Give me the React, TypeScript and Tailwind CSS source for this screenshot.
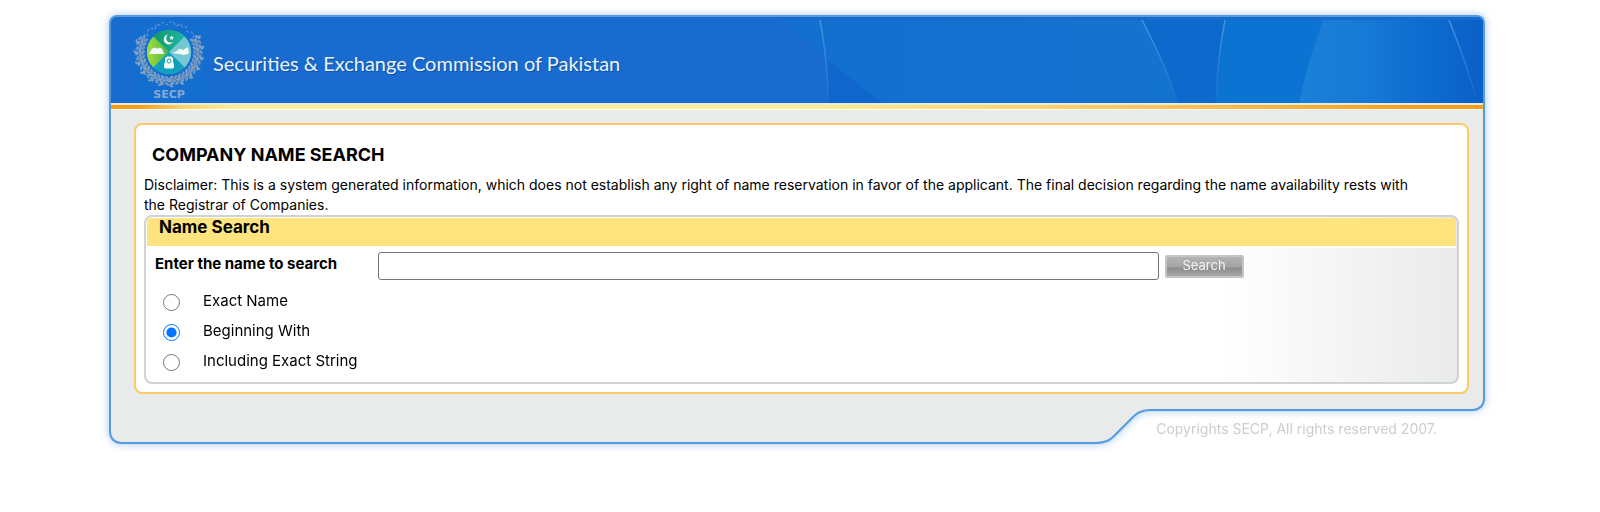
import { useState } from "react";

const searchModes = [
  { value: "exact", label: "Exact Name" },
  { value: "beginning", label: "Beginning With" },
  { value: "including", label: "Including Exact String" },
];

const wreathAngles = Array.from({ length: 26 }, (_, i) => -27 + i * 9.36);
const scriptAngles = Array.from({ length: 15 }, (_, i) => -144 + i * 7.8);

function polar(angle: number, r: number) {
  const rad = (angle * Math.PI) / 180;
  return { x: 38 + r * Math.cos(rad), y: 33 + r * Math.sin(rad) };
}

function Leaf({ angle, r, tilt, size }: { angle: number; r: number; tilt: number; size: number }) {
  const { x, y } = polar(angle, r);
  return <ellipse cx={x} cy={y} rx={size} ry={size * 0.5} transform={`rotate(${angle + tilt} ${x} ${y})`} />;
}

function Emblem() {
  return (
    <svg viewBox="0 0 76 82" className="w-[76px] h-[82px] shrink-0" role="img" aria-label="SECP emblem">
      <defs>
        <linearGradient id="emblem-left" x1="0" x2="1">
          <stop offset="0" stopColor="#a5dc3c" />
          <stop offset="1" stopColor="#4cb648" />
        </linearGradient>
        <linearGradient id="emblem-top" x1="0" x2="1">
          <stop offset="0" stopColor="#109a68" />
          <stop offset="1" stopColor="#1fb5a4" />
        </linearGradient>
      </defs>

      <rect width="76" height="82" fill="#146ed0" />

      {/* laurel */}
      <g fill="#8ba4bf">
        {wreathAngles.map((angle, i) => {
          // both branches grow upwards from the bottom
          const side = angle < 90 ? -1 : 1;
          return (
            <g key={i} opacity={i % 2 ? 0.8 : 0.95}>
              <Leaf angle={angle} r={26} tilt={side * 130} size={2.6} />
              <Leaf angle={angle + 4} r={29} tilt={side * 70} size={2.8} />
              <Leaf angle={angle - 1} r={32} tilt={side * 120} size={2.6} />
              {i % 2 === 0 && <Leaf angle={angle + 1} r={34} tilt={side * 50} size={2.2} />}
            </g>
          );
        })}
      </g>
      <g stroke="#6f9bd0" fill="none" strokeWidth="1.2" opacity="0.85">
        {scriptAngles.map((angle, i) => {
          const a = polar(angle, i % 3 ? 30 : 27);
          const b = polar(angle + 5, i % 2 ? 30 : 28);
          return <path key={i} d={`M${a.x} ${a.y}L${b.x} ${b.y}`} />;
        })}
      </g>

      {/* four quarters */}
      <circle cx="38" cy="33" r="22" fill="#12a0c4" />
      <path d="M38 33L22.4 17.4A22 22 0 0 1 53.6 17.4Z" fill="url(#emblem-top)" />
      <path d="M38 33L53.6 17.4A22 22 0 0 1 53.6 48.6Z" fill="#74c8d2" />
      <path d="M38 33L22.4 48.6A22 22 0 0 1 22.4 17.4Z" fill="url(#emblem-left)" />
      <path d="M38 33L53.6 48.6A22 22 0 0 1 22.4 48.6Z" fill="#12a0bc" />
      <g fill="#f1fbf8">
        <path d="M37 15.5a5 5 0 1 0 5.2 7.2a4.2 4.2 0 1 1 -5.2 -7.2Z" />
        <path d="M40.5 16.4l.8 1.5 1.7 .1 -1.2 1.2 .4 1.7 -1.5 -.8 -1.5 .8 .3 -1.7 -1.2 -1.2 1.7 -.2Z" />
        <path d="M18 35l3.2-5.6 2.8-1 2 1.4 2-1.4 2.8 1 2.6 5.6Z" />
        <path d="M41 34l4-1.5 4-3 3 1.5 5-3 1 6.5 -5 1.5 -5-1Z" />
        <path d="M34 39l2-1.6h4l2 1.6v4l1 2.5v2.5l-1 1.5h-8l-1-1.5V45.500l1-2.5Z" />
      </g>
      <circle cx="38" cy="42" r="2" fill="none" stroke="#12a0bc" />

      <text
        x="38"
        y="79"
        textAnchor="middle"
        className="font-['DejaVu_Sans',sans-serif] text-[11px] font-bold"
        fill="#86a9d2"
      >
        SECP
      </text>
    </svg>
  );
}

function HeaderArt() {
  return (
    <svg viewBox="780 17 703 86" className="absolute right-0 top-0 w-[703px] h-[86px]" aria-hidden="true">
      <defs>
        <linearGradient id="art-mid" x1="0" x2="1">
          <stop offset="0" stopColor="#126fd0" />
          <stop offset="1" stopColor="#1573d0" />
        </linearGradient>
        <linearGradient id="art-right" x1="0" x2="1">
          <stop offset="0" stopColor="#1b80d8" />
          <stop offset="0.35" stopColor="#177ad6" />
          <stop offset="0.7" stopColor="#0d6bcf" />
          <stop offset="1" stopColor="#0a60c8" />
        </linearGradient>
        <linearGradient id="art-line" x1="0" y1="0" x2="0" y2="1">
          <stop offset="0" stopColor="#4793de" />
          <stop offset="1" stopColor="#4793de" stopOpacity="0.1" />
        </linearGradient>
      </defs>
      <path d="M784 20H1142Q1166 66 1178 103H882L827 60Z" fill="url(#art-mid)" />
      <path d="M827 60L882 103H829Z" fill="#1066cc" />
      <path d="M1142 20H1226Q1217 60 1216 103H1178Q1166 66 1142 20Z" fill="#0d69cc" />
      <path d="M1226 20H1323Q1307 64 1299 103H1216Q1217 60 1226 20Z" fill="#0b73d1" />
      <path d="M1323 20H1483V103H1299Q1307 64 1323 20Z" fill="url(#art-right)" />
      <g fill="none" stroke="url(#art-line)" strokeWidth="1.5">
        <path d="M820 20Q828 62 828 102" />
        <path d="M1142 20Q1166 66 1178 102" />
        <path d="M1225 20Q1217 60 1216 102" />
        <path d="M1449 20Q1466 62 1476 98" />
      </g>
      <path d="M780 17H1483V20H780Z" fill="#186acd" />
    </svg>
  );
}

function PanelHeader() {
  return (
    <header className="relative border-2 border-b-0 border-[#549cdf] rounded-t-lg overflow-hidden bg-[#196bcf]">
      <HeaderArt />
      <div className="relative flex items-center h-[86px] pl-5">
        <Emblem />
        <span className="ml-1.5 mt-1.5 font-['Century_Gothic','Lato','Liberation_Sans',sans-serif] text-[20px] leading-7 text-[#e9f3fc] [text-shadow:1px_1px_1px_#1250a0]">
          Securities &amp; Exchange Commission of Pakistan
        </span>
      </div>
      <div className="h-[7px] border-t-2 border-b border-t-[#e3ebe8] border-b-white bg-[linear-gradient(to_right,#fb9d10_0%,#fb9d10_2%,#fdcf60_5%,#fff08c_9%,#fff08c_50%,#fdc455_76%,#fb9f1a_95%)]" />
    </header>
  );
}

// lower edge of the panel, stepping up on the right to leave room for the copyright line
function PanelFoot() {
  return (
    <div className="flex items-start">
      <div className="flex-1 h-[50px] bg-[#e8ebea] border-l-2 border-b-2 border-[#549cdf] rounded-bl-xl" />
      <svg viewBox="0 0 56 50" className="w-14 h-[50px] shrink-0" aria-hidden="true">
        <path d="M0 0H56V16H54Q46 16 40 22L20 41Q12 49 2 49H0Z" fill="#e8ebea" />
        <path d="M0 49Q12 49 18 43L39 22Q45 16 56 16" fill="none" stroke="#549cdf" strokeWidth="2" />
      </svg>
      <div className="w-[334px] h-[17px] bg-[#e8ebea] border-r-2 border-b-2 border-[#549cdf] rounded-br-xl" />
    </div>
  );
}

function SearchForm() {
  const [name, setName] = useState("");
  const [mode, setMode] = useState("beginning");

  return (
    <form
      onSubmit={(e) => e.preventDefault()}
      className="border-2 border-[#d0d3d3] rounded-lg p-px pb-1.5 bg-[linear-gradient(to_right,#ffffff_0%,#ffffff_82%,#f7f7f7_89%,#e9eaea_100%)]"
    >
      <h2 className="h-7 pl-3 rounded-t-sm bg-[#fde47f] text-[17px] leading-[18px] font-bold">Name Search</h2>
      <div className="flex items-center gap-1.5 pt-1 pl-2 border-t-2 border-white">
        <label htmlFor="company-name" className="w-[217px] text-[15px] leading-5 font-bold pb-1">
          Enter the name to search
        </label>
        <input
          id="company-name"
          type="text"
          value={name}
          onChange={(e) => setName(e.target.value)}
          className="w-[60%] h-7 px-1 bg-white border border-[#767676] rounded-[3px] text-[15px]"
        />
        <button
          type="submit"
          className="w-[79px] h-[23px] pb-1 rounded-xs border-2 border-[#c4c4c4] bg-[linear-gradient(to_bottom,#b4b4b4_0%,#a3a3a3_50%,#8d8d8d_60%,#a8a8a8_100%)] text-[13px] leading-4 text-[#f4f4f4]"
        >
          Search
        </button>
      </div>
      <div className="flex flex-col pt-1.5">
        {searchModes.map((item) => (
          <label key={item.value} className="flex items-center h-[30px] pl-4 text-[15px] leading-5">
            <input
              type="radio"
              name="mode"
              value={item.value}
              checked={mode === item.value}
              onChange={() => setMode(item.value)}
              className="w-[17px] h-[17px] mt-0.5 mr-[23px]"
            />
            {item.label}
          </label>
        ))}
      </div>
    </form>
  );
}

export default function App() {
  return (
    <div className="min-h-screen pt-[15px] pr-1.5 bg-white text-black font-['Century_Gothic','Inter','Liberation_Sans',sans-serif]">
      <div className="w-[1376px] max-w-full mx-auto">
        <div className="drop-shadow-[0_0_4px_rgba(110,160,230,0.6)]">
          <PanelHeader />
          <main className="border-x-2 border-[#549cdf] bg-[#e8ebea] pt-[13px] pl-[23px] pr-[14px]">
            <section className="border-2 border-[#fbcb66] rounded-lg bg-white px-2 pt-[18px] pb-2">
              <h1 className="pl-2 text-[18px] leading-6 font-bold">COMPANY NAME SEARCH</h1>
              <p className="pt-2 pr-9 text-[14px] leading-5">
                Disclaimer: This is a system generated information, which does not establish any right of name
                reservation in favor of the applicant. The final decision regarding the name availability rests with the
                Registrar of Companies.
              </p>
              <SearchForm />
            </section>
          </main>
          <PanelFoot />
        </div>
        <footer className="relative -mt-[25px] pr-12 pb-6 text-right text-[14px] leading-5 text-[#cdcdcd]">
          Copyrights SECP, All rights reserved 2007.
        </footer>
      </div>
    </div>
  );
}
